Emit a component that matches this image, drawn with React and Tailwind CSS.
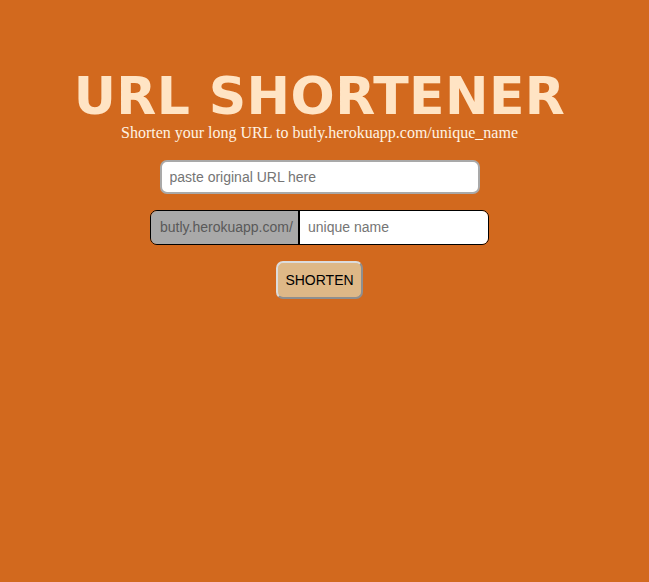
export default function App() {
  return (
    <div className="min-h-[582px] w-full bg-[#d2691e] flex flex-col items-center pt-[68px] pr-[10px] font-['Liberation_Sans',Arial,sans-serif]">
      <h1 className="text-[52px] leading-[56px] font-bold tracking-[0.4px] text-[#ffe4c4] font-['DejaVu_Sans',Verdana,sans-serif]">
        URL SHORTENER
      </h1>
      <p className="text-[16px] leading-[18px] text-[#fff3e3] font-['Liberation_Serif',serif]">
        Shorten your long URL to butly.herokuapp.com/unique_name
      </p>
      <input
        className="mt-[18px] w-[320px] h-[34px] bg-white rounded-[7px] border-2 border-[#a9a9a9] px-[8px] text-[14px] placeholder:text-[#757575] outline-none"
        placeholder="paste original URL here"
      />
      <div className="mt-[16px] flex w-[339px] h-[35px] rounded-[7px] border border-black overflow-hidden">
        <div className="w-[149px] bg-[#a9a9a9] text-[#595959] text-[14px] flex items-center pl-[9px] border-r-2 border-black">butly.herokuapp.com/</div>
        <input className="flex-1 min-w-0 bg-white px-[8px] text-[14px] placeholder:text-[#757575] outline-none" placeholder="unique name" />
      </div>
      <button className="mt-[16px] w-[87px] h-[38px] bg-[#deb887] rounded-[7px] border-2 border-t-[#dcdcdc] border-l-[#dcdcdc] border-r-[#8f8f8f] border-b-[#8f8f8f] text-[14px] text-black">
        SHORTEN
      </button>
    </div>
  );
}
